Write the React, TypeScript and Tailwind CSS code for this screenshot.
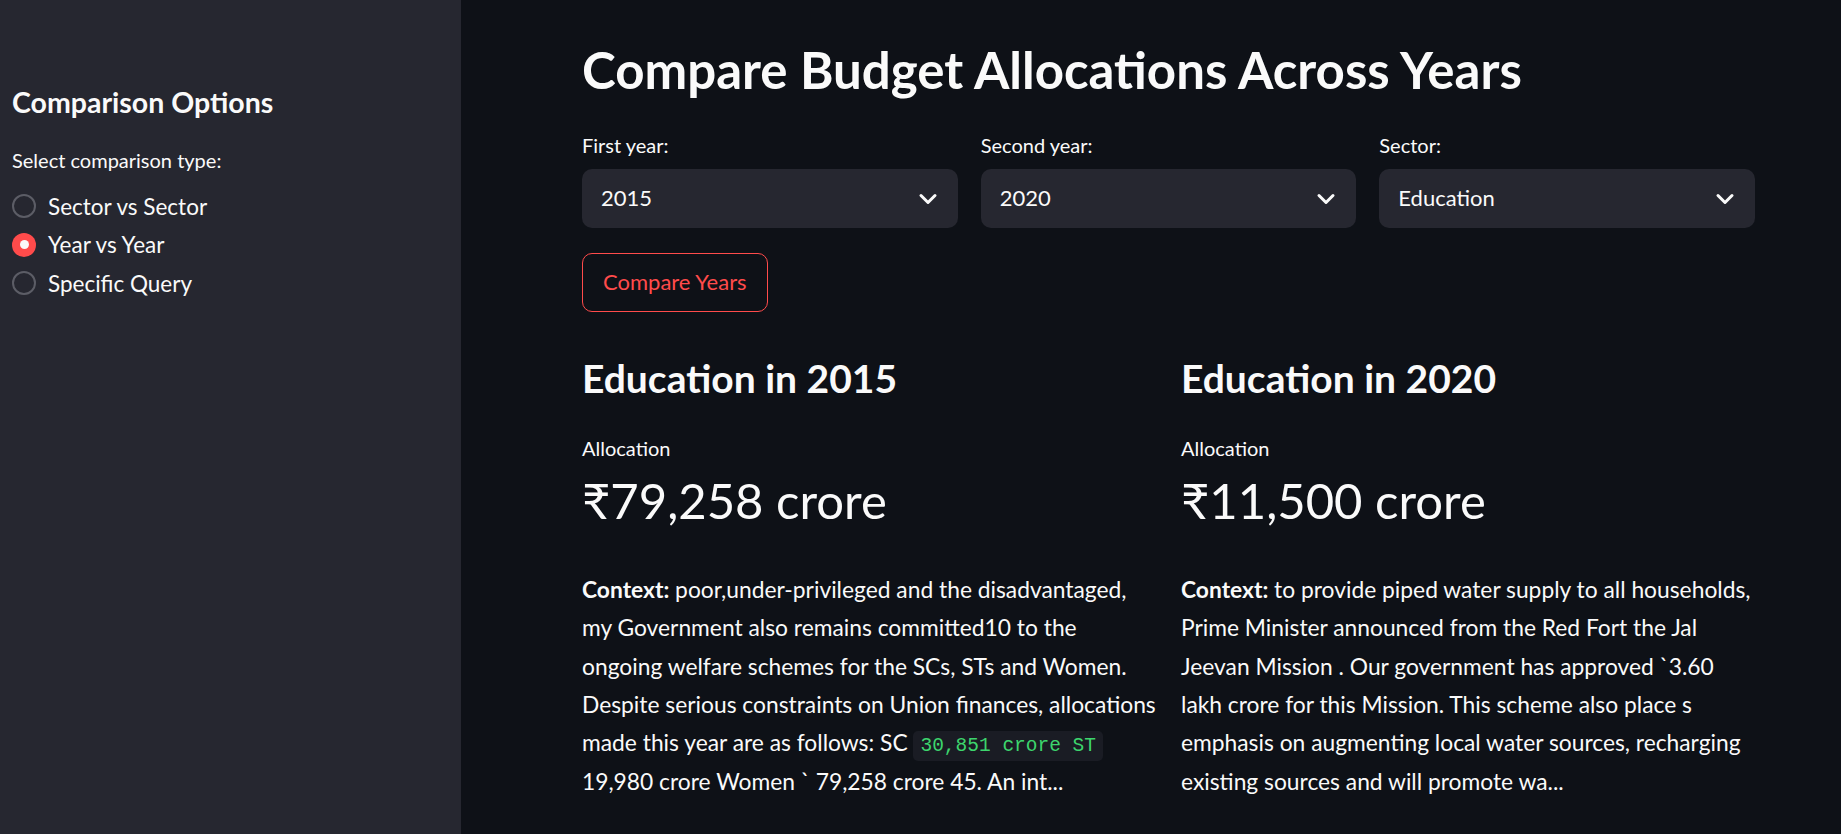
import React, { useState } from 'react';
import { ChevronDown } from 'lucide-react';

const FONT = { fontFamily: 'Lato, "Noto Sans", sans-serif' };

const OPTIONS = ['Sector vs Sector', 'Year vs Year', 'Specific Query'];

const SelectBox: React.FC<{ label: string; value: string }> = ({ label, value }) => (
  <div className="flex flex-col">
    <label className="text-[20px] leading-[24px] text-[#fafafa] h-[24px]">{label}</label>
    <div className="mt-[12px] h-[59px] rounded-[10px] bg-[#262730] flex items-center justify-between pl-[19px] pr-[16px]">
      <span className="text-[22px] leading-[1.2] text-[#fafafa]">{value}</span>
      <ChevronDown size={28} strokeWidth={2.6} className="text-[#fafafa]" />
    </div>
  </div>
);

const Code: React.FC<{ children: React.ReactNode }> = ({ children }) => (
  <code
    className="inline-block align-middle h-[30px] leading-[30px] px-[7px] rounded-[5px] bg-[#1a1c24] text-[#3dd56d] text-[19.5px]"
    style={{ fontFamily: '"Liberation Mono", "DejaVu Sans Mono", monospace' }}
  >
    {children}
  </code>
);

const YearColumn: React.FC<{ title: string; value: string; lines: React.ReactNode[] }> = ({ title, value, lines }) => (
  <div className="flex flex-col">
    <h3 className="text-[39px] leading-[1.2] font-bold text-[#fafafa]">{title}</h3>
    <div className="mt-[34px] text-[20px] leading-[24px] text-[#fafafa]">Allocation</div>
    <div className="mt-[11px] text-[49px] leading-[1.2] text-[#fafafa]">{value}</div>
    <p className="mt-[40px] text-[22.8px] leading-[38.4px] text-[#fafafa] whitespace-nowrap">
      {lines.map((l, i) => (
        <span key={i} className="block">{l}</span>
      ))}
    </p>
  </div>
);

const App: React.FC = () => {
  const [mode, setMode] = useState('Year vs Year');

  return (
    <div className="flex w-screen h-[834px] overflow-hidden bg-[#0e1117]" style={FONT}>
      {/* sidebar */}
      <aside className="w-[461px] shrink-0 h-full bg-[#262730] pl-[12px] pt-[85px]">
        <h2 className="text-[28.5px] leading-[1.2] font-bold text-[#fafafa]">Comparison Options</h2>
        <div className="mt-[29px] text-[20px] leading-[24px] text-[#fafafa]">Select comparison type:</div>
        <div className="mt-[15px] flex flex-col">
          {OPTIONS.map((opt) => {
            const active = opt === mode;
            return (
              <button
                key={opt}
                onClick={() => setMode(opt)}
                className="h-[38.5px] flex items-center gap-[12px] text-left"
              >
                {active ? (
                  <span className="w-[24px] h-[24px] rounded-full bg-[#ff4b4b] flex items-center justify-center">
                    <span className="w-[9px] h-[9px] rounded-full bg-[#fafafa]" />
                  </span>
                ) : (
                  <span className="w-[24px] h-[24px] rounded-full border-2 border-[#5c5d66]" />
                )}
                <span className="text-[22.5px] leading-[1.2] text-[#fafafa]">{opt}</span>
              </button>
            );
          })}
        </div>
      </aside>

      {/* main */}
      <main className="flex-1 pl-[121px] pr-[86px] pt-[39px]">
        <h1 className="text-[51px] leading-[1.2] font-bold text-[#fafafa] whitespace-nowrap">
          Compare Budget Allocations Across Years
        </h1>

        <div className="mt-[33px] grid grid-cols-3 gap-[23px]">
          <SelectBox label="First year:" value="2015" />
          <SelectBox label="Second year:" value="2020" />
          <SelectBox label="Sector:" value="Education" />
        </div>

        <button className="mt-[25px] h-[59px] px-[20px] rounded-[10px] border border-[#ff4b4b] text-[#ff4b4b] text-[22px] leading-[1.2]">
          Compare Years
        </button>

        <div className="mt-[43px] grid grid-cols-2 gap-[25px]">
          <YearColumn
            title="Education in 2015"
            value="₹79,258 crore"
            lines={[
              <>
                <b>Context:</b> poor,under-privileged and the disadvantaged,
              </>,
              'my Government also remains committed10 to the',
              'ongoing welfare schemes for the SCs, STs and Women.',
              'Despite serious constraints on Union finances, allocations',
              <>
                made this year are as follows: SC <Code>30,851 crore ST</Code>
              </>,
              '19,980 crore Women ` 79,258 crore 45. An int...',
            ]}
          />
          <YearColumn
            title="Education in 2020"
            value="₹11,500 crore"
            lines={[
              <>
                <b>Context:</b> to provide piped water supply to all households,
              </>,
              'Prime Minister announced from the Red Fort the Jal',
              'Jeevan Mission . Our government has approved `3.60',
              'lakh crore for this Mission. This scheme also place s',
              'emphasis on augmenting local water sources, recharging',
              'existing sources and will promote wa...',
            ]}
          />
        </div>
      </main>
    </div>
  );
};

export default App;
